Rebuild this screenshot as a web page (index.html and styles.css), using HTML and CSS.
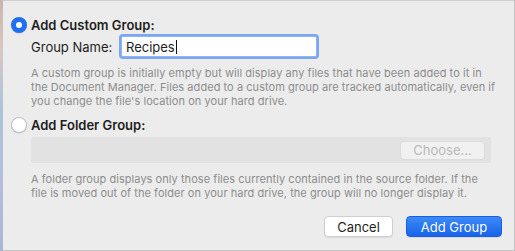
FILE: index.html
```html
<!DOCTYPE html>
<html lang="en">
  <head>
    <meta charset="UTF-8">
    <title>New Group</title>
    <link rel="stylesheet" href="styles.css">
  </head>
  <body>
    <div class="edge"></div>
    <div class="sheet">
      <div class="option">
        <span class="radio on"></span>
        <span class="title">Add Custom Group:</span>
      </div>
      <div class="body">
        <div class="name-row">
          <label for="name">Group Name:</label>
          <div class="field"><span>Recipes</span><i class="caret"></i></div>
        </div>
        <p class="note">A custom group is initially empty but will display any files that have been added to it in<br>
          the Document Manager. Files added to a custom group are tracked automatically, even if<br>
          you change the file's location on your hard drive.</p>
      </div>

      <div class="option second">
        <span class="radio"></span>
        <span class="title">Add Folder Group:</span>
      </div>
      <div class="body">
        <div class="path">
          <button class="choose" disabled>Choose...</button>
        </div>
        <p class="note">A folder group displays only those files currently contained in the source folder. If the<br>
          file is moved out of the folder on your hard drive, the group will no longer display it.</p>
      </div>

      <div class="actions">
        <button class="btn">Cancel</button>
        <button class="btn primary">Add Group</button>
      </div>
    </div>
  </body>
</html>
```

FILE: styles.css
```css
html, body {
  margin: 0;
  height: 100%;
}

body {
  display: flex;
  background: #ececec;
  font-family: Inter, "Liberation Sans", sans-serif;
  color: #1e1e1e;
}

.edge {
  width: 3px;
  background: linear-gradient(#c9b6b0 0%, #d9c7c2 20%, #a9c3dc 45%, #b5bedf 70%, #aab6d8 100%);
}

.sheet {
  flex: 1;
  border-top: 1px solid #cfcfcf;
  border-right: 1px solid #c4c4c4;
  border-bottom: 1px solid #c4c4c4;
  padding: 16px 0 0 8px;
}

.option {
  display: flex;
  align-items: center;
  gap: 4px;
}

.option.second {
  margin-top: 9px;
}

.radio {
  width: 16px;
  height: 16px;
  border-radius: 50%;
  background: #fff;
  border: 1px solid #c0c0c0;
  box-sizing: border-box;
  box-shadow: 0 0.5px 1px rgba(0, 0, 0, 0.15);
}

.radio.on {
  border: 5px solid #1f6ff1;
}

.title {
  font-weight: 600;
  font-size: 13px;
}

.body {
  padding-left: 20px;
}

.name-row {
  display: flex;
  align-items: center;
  margin-top: 3px;
}

.name-row label {
  font-size: 13px;
  width: 90px;
}

.field {
  width: 196px;
  height: 21px;
  box-sizing: border-box;
  background: #fff;
  border: 1px solid #8fb4f2;
  box-shadow: 0 0 0 2px #7aa7f3;
  border-radius: 2px;
  display: flex;
  align-items: center;
  padding-left: 4px;
  font-size: 13px;
}

.caret {
  width: 1px;
  height: 14px;
  background: #111;
  margin-left: 1px;
}

.note {
  margin: 9px 0 0;
  font-size: 11px;
  line-height: 14px;
  letter-spacing: 0.05px;
  color: #8c8c8c;
  white-space: nowrap;
}

.path {
  margin-top: 4px;
  width: 460px;
  height: 26px;
  background: #e2e2e2;
  border-radius: 3px;
  display: flex;
  justify-content: flex-end;
  align-items: center;
  padding-right: 6px;
  box-sizing: border-box;
}

.choose {
  width: 85px;
  height: 19px;
  font-family: inherit;
  font-size: 13px;
  color: #b9b9b9;
  background: #f1f1f1;
  border: 1px solid #dcdcdc;
  border-radius: 4px;
  padding: 0;
}

.actions {
  display: flex;
  justify-content: flex-end;
  gap: 13px;
  margin-top: 16px;
  padding-right: 12px;
}

.btn {
  height: 21px;
  font-family: inherit;
  font-size: 13px;
  border-radius: 4px;
  padding: 0;
  width: 69px;
  background: #fff;
  color: #1e1e1e;
  border: 1px solid #cfcfcf;
  box-shadow: 0 1px 1px rgba(0, 0, 0, 0.08);
}

.btn.primary {
  width: 96px;
  color: #fff;
  border: 1px solid #1a5fe0;
  background: linear-gradient(#3d8af7, #1764ec);
}
```
